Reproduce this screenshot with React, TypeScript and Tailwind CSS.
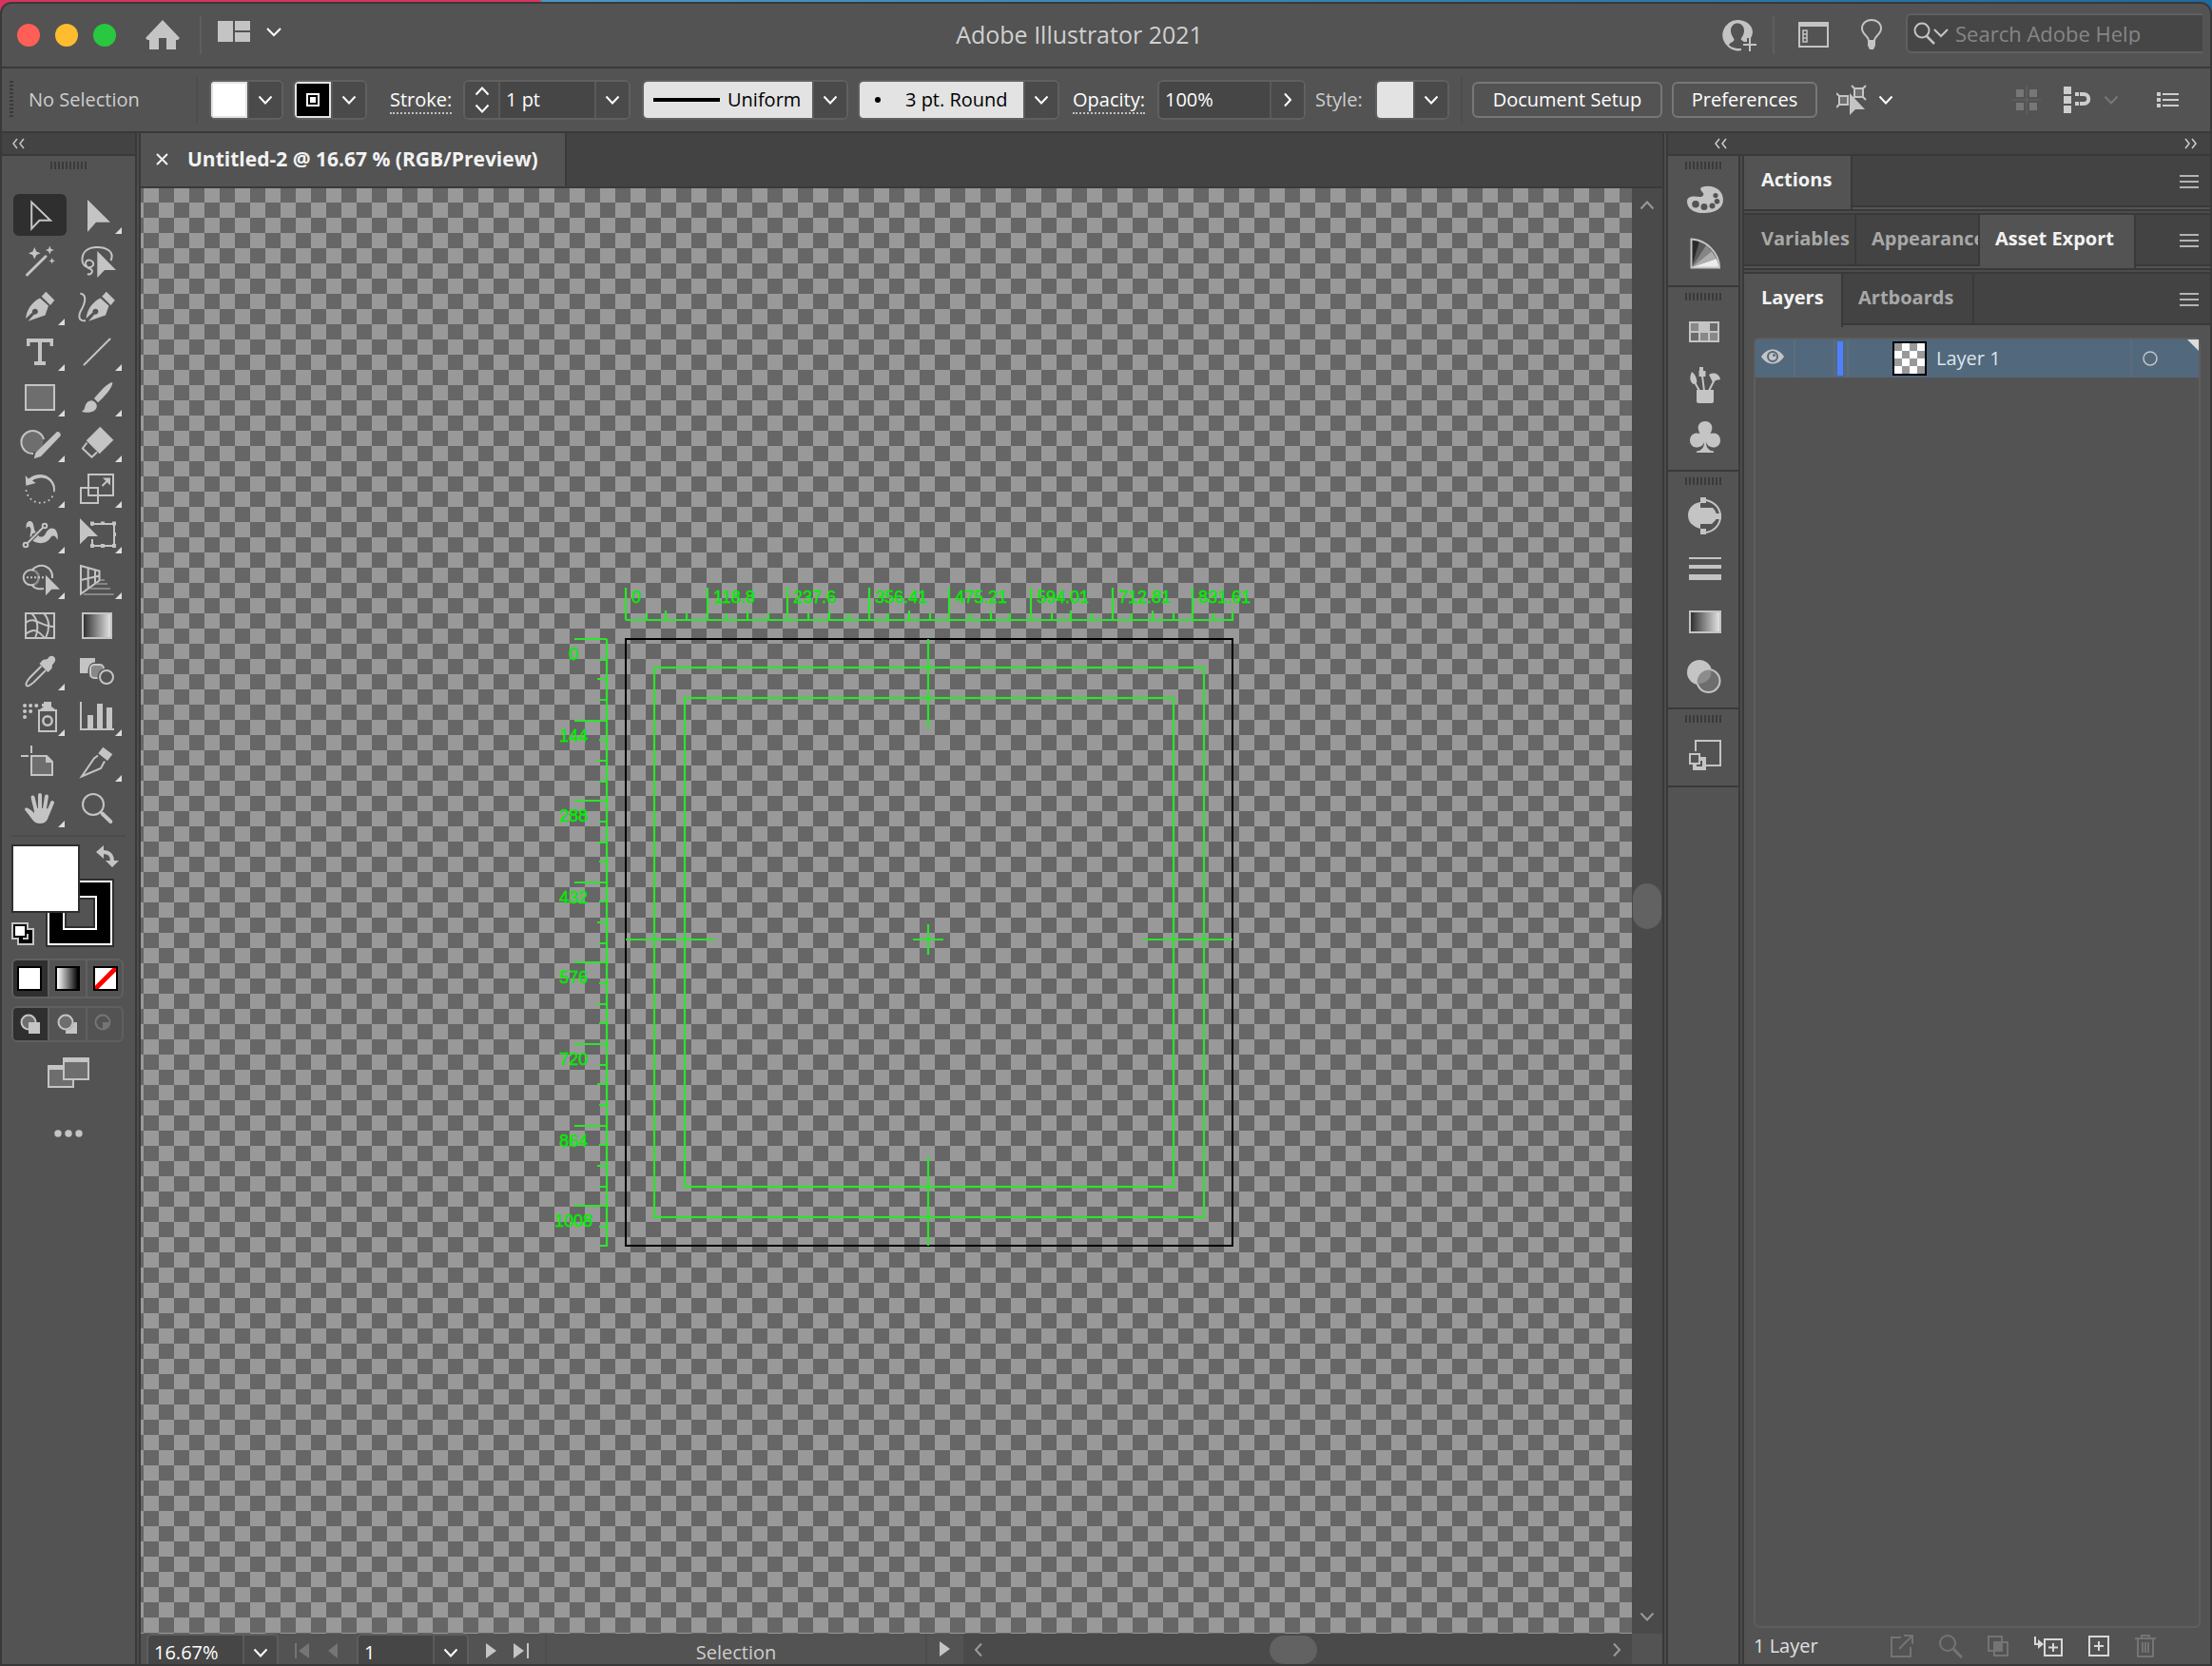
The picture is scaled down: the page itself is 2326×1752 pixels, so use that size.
import type { ReactNode } from 'react'

interface Tool {
  name: string
  icon: ReactNode
  more?: boolean
}

const line = { fill: 'none', stroke: 'currentColor', strokeWidth: 2 }

const nib = (
  <>
    <path d="M34.3 8.7 43.3 17.7 39 23 29.7 13.7Z" />
    <path d="M28 15.5 37 23.5 33.5 33.5 15.5 39.7 22 32.5 A3 3 0 1 0 20 30.5 L13 37 C14 28 19 20 28 15.5Z" />
  </>
)

const tools: Tool[] = [
  { name: 'Selection', icon: <path {...line} d="M19.2 10.5V38.5L27.5 29.8H39Z" /> },
  { name: 'Direct Selection', more: true, icon: <path d="M18 8V42L27 31.7H42Z" /> },
  {
    name: 'Magic Wand',
    icon: (
      <>
        <path {...line} strokeWidth={3} strokeLinecap="round" d="M14.5 39 34 19.8" />
        <path d="M22.3 10 24.2 14.4 28.6 16.3 24.2 18.2 22.3 22.6 20.4 18.2 16 16.3 20.4 14.4Z" />
        <path d="M38.3 8.5 39.6 11.7 42.8 13 39.6 14.3 38.3 17.5 37 14.3 33.8 13 37 11.7Z" />
        <path d="M40.7 21 41.6 23.4 44 24.3 41.6 25.2 40.7 27.6 39.8 25.2 37.4 24.3 39.8 23.4Z" />
      </>
    ),
  },
  {
    name: 'Lasso',
    icon: (
      <>
        <path {...line} d="M42.5 24C47 14 37 10 28 10 18 10 12 15 12.5 24 13 30 20 34 24 29 26 23 15 21 16 28 17 33 23 32 23 35 23 38 20 39 18 38" />
        <path d="M28.3 14V42L36 34H48Z" />
      </>
    ),
  },
  { name: 'Pen', more: true, icon: nib },
  {
    name: 'Curvature',
    icon: (
      <>
        <path {...line} d="M10.3 10.7C17 11 16 19 12.5 26 7 35 9 40 16 39.3" />
        <g transform="translate(3.5 0)">{nib}</g>
      </>
    ),
  },
  { name: 'Type', more: true, icon: <path d="M14 10H42V18H38.5V14H30V34H34V38H22V34H26V14H17.5V18H14Z" /> },
  { name: 'Line Segment', more: true, icon: <path {...line} strokeLinecap="round" d="M14.5 37.5 41.5 10.5" /> },
  { name: 'Rectangle', more: true, icon: <rect x="13" y="11" width="30" height="26" fill="#6e6e6e" stroke="currentColor" strokeWidth="2" /> },
  {
    name: 'Paintbrush',
    more: true,
    icon: (
      <>
        <path d="M44.3 8C45 13 36 23 29 29.3L25 25C31 18 39 8.5 44.3 8Z" />
        <path d="M23.5 27.5C29 30 29 35 25 38 21 40.500 15 40 12 38.700 16 36.500 14.500 33.500 17 30 18.500 28 21 27 23.500 27.500Z" />
      </>
    ),
  },
  {
    name: 'Shaper',
    more: true,
    icon: (
      <>
        <circle cx="20.3" cy="22.500" r="11" fill="#6e6e6e" />
        <path {...line} d="M21 35A12 12 0 1 1 32 20" />
        <path d="M45.500 12.500C47 11 51 14 49.500 16.500L29 38 21.700 40.300 23.500 34Z" />
      </>
    ),
  },
  {
    name: 'Eraser',
    more: true,
    icon: (
      <>
        <path d="M31.300 6.700 45.300 20.700 30.700 35.300 16.700 21.300Z" />
        <path {...line} strokeLinejoin="round" d="M17.500 23.500 12.800 29.500 22.500 38.700 28 33.500" />
      </>
    ),
  },
  {
    name: 'Rotate',
    more: true,
    icon: (
      <>
        <path d="M12.700 10 16 13.500C30 2 47 14 43.500 27.500L42 27C43 15 31 8.500 20 15.500L23.700 18 13.300 20.700Z" />
        <path {...line} strokeLinecap="round" strokeDasharray="0.100 5" d="M13.500 26C17 42 38 43 42.500 29" />
      </>
    ),
  },
  {
    name: 'Scale',
    more: true,
    icon: (
      <>
        <rect {...line} x="19" y="9" width="26" height="22" />
        <rect {...line} x="11" y="23" width="18" height="16" />
        <path {...line} d="M33.500 21 39 15.500" />
        <path d="M34 12.500H42V20.500Z" />
      </>
    ),
  },
  {
    name: 'Width',
    more: true,
    icon: (
      <>
        <path d="M13.500 18C13 11 16 9 19 10.500 22 12 21 17 23 21 25 27 31 29 34 23 37 17 42 16 45 20 47 23 47 27 46.500 30 45 26 42 24 39.500 27 35 34 28 34 23 32 17 30 18 23 18.500 19 18 15 15 15 13.500 18Z" />
        <circle cx="22" cy="25.300" r="3.500" fill="#535353" stroke="currentColor" strokeWidth="2" />
        <path d="M15 33 31 17" stroke="#535353" strokeWidth="4" />
        <path {...line} d="M15 33 31 17" />
        <circle {...line} cx="13" cy="35" r="2.300" />
        <circle {...line} cx="33" cy="15" r="2.300" />
      </>
    ),
  },
  {
    name: 'Free Transform',
    more: true,
    icon: (
      <>
        <path {...line} d="M23 15V13H46V36H23V29" />
        <path d="M21 10.500H25V14.500H21ZM32 10.500H36V14H32ZM44 10.500H48V14.500H44ZM45 22H48V26H45ZM21 34H25V38H21ZM32 34H36V38H32ZM44 34H48V38H44ZM10 7V34.300L18.700 26H29Z" />
      </>
    ),
  },
  {
    name: 'Shape Builder',
    more: true,
    icon: (
      <>
        <path {...line} d="M20 13C30 4 42 11 41 22M20 30C24 34 28 33.500 32 33" />
        <circle {...line} cx="18.700" cy="21.300" r="8" />
        <path d="M22 14C28 17 28 26 22 29" fill="none" stroke="#888" strokeWidth="2" />
        <path {...line} strokeDasharray="2 2" d="M14 21.300H33" />
        <path d="M34 18.700V40.300L40.300 33.700H49Z" />
      </>
    ),
  },
  {
    name: 'Perspective Grid',
    more: true,
    icon: (
      <>
        <path {...line} d="M11 9 30.500 14.500V24.500L11 38.500ZM18.700 11V33M26 13V28M11 24 30.500 19.500" />
        <path d="M31 24H36M27 28H39M21 33H42M14 39H45.700" fill="none" stroke="#999" strokeWidth="1.500" />
      </>
    ),
  },
  {
    name: 'Mesh',
    icon: (
      <>
        <rect {...line} x="13" y="11" width="30" height="26" />
        <path {...line} d="M19 11C26 17 27 27 23 37M32 11C39 18 38 29 34 37M13 21C22 13 28 25 43 25M13 33C22 26 26 29 33 37" />
      </>
    ),
  },
  { name: 'Gradient', icon: <rect x="13" y="11" width="30" height="26" fill="url(#ramp)" stroke="currentColor" strokeWidth="2" /> },
  {
    name: 'Eyedropper',
    more: true,
    icon: (
      <>
        <path d="M36 11C38 7 41 7 43 9 45 11 44.500 14 41 17L40.500 21 36.500 25 27.500 16 31 12Z" />
        <path {...line} d="M29.500 18.500 17 31C15 34 12 37 14 39 16 41 19 37 21.500 35.500L34 23" />
      </>
    ),
  },
  {
    name: 'Blend',
    icon: (
      <>
        <path d="M10 10H26V14.500C20 15 18.500 19 18.500 26H10Z" />
        <rect x="21" y="17" width="14" height="14" rx="4" fill="#888" stroke="currentColor" strokeWidth="2" />
        <circle cx="38" cy="30" r="9.500" fill="#535353" />
        <circle {...line} cx="38" cy="30" r="7" />
      </>
    ),
  },
  {
    name: 'Symbol Sprayer',
    more: true,
    icon: (
      <>
        <path {...line} strokeWidth={4} strokeLinecap="round" strokeDasharray="0.100 6" d="M12 12H25M12 18H19M12 24H13" />
        <path d="M32 8H40V13L44 16H28L32 13H30V10H32Z" />
        <rect {...line} x="27" y="17" width="18" height="22" />
        <circle {...line} strokeWidth={2.500} cx="36" cy="28" r="4.700" />
      </>
    ),
  },
  { name: 'Column Graph', more: true, icon: <path d="M10 8H12V36H18V22H24V36H28V10H34V36H38V14H44V36H46V38H10Z" /> },
  {
    name: 'Artboard',
    icon: (
      <>
        <path d="M19 17H35L41 23V37H19Z" fill="#6e6e6e" stroke="currentColor" strokeWidth="2" />
        <path d="M34 16V24H42Z" />
        <path {...line} d="M19 6V14M8 17H16" />
      </>
    ),
  },
  {
    name: 'Slice',
    more: true,
    icon: (
      <>
        <path d="M34.300 7.700 44.300 15.300 39 22 29.300 14.300Z" />
        <path {...line} d="M29 16.500 25 19.500 12 38.500 32 30 36 22.500" />
      </>
    ),
  },
  {
    name: 'Hand',
    more: true,
    icon: (
      <>
        <path {...line} strokeWidth={4} strokeLinecap="round" d="M28 10V26M20.500 12.500 24 27M35 11.500 32.500 27M41 18 36 30" />
        <path d="M22 24H35L38.500 26C37 34 36 40 28 40 21 40 21 36 12 25.500 12.500 22 16 23.500 22 29Z" />
      </>
    ),
  },
  {
    name: 'Zoom',
    icon: (
      <>
        <circle {...line} cx="24" cy="20" r="11" />
        <path {...line} strokeWidth={4} strokeLinecap="round" d="M33.500 29.500 42.300 38" />
      </>
    ),
  },
]

const dock: Tool[][] = [
  [
    {
      name: 'Color',
      icon: (
        <path
          fillRule="evenodd"
          d="M35 15C46 11 58 17 58 28 58 38 48 42 38 42 28 42 20 38 20 30 20 24 27 24 33 25 37 25 38 23 37 21 35 19 33 17 35 15ZM50 21A2.600 2.600 0 1 0 50 26.200 2.600 2.600 0 1 0 50 21ZM51.500 27A2.800 2.800 0 1 0 51.500 32.600 2.800 2.800 0 1 0 51.500 27ZM46.500 31.500A3 3 0 1 0 46.500 37.500 3 3 0 1 0 46.500 31.500ZM38 32A3.500 3.500 0 1 0 38 39 3.500 3.500 0 1 0 38 32ZM29 29A3.800 3.800 0 1 0 29 36.600 3.800 3.800 0 1 0 29 29Z"
        />
      ),
    },
    {
      name: 'Color Guide',
      icon: (
        <>
          <path d="M25 43 25 14 33 16Z" fill="#2b2b2b" />
          <path d="M25 43 33 16 40 20Z" fill="#5a5a5a" />
          <path d="M25 43 40 20 46 26Z" fill="#868686" />
          <path d="M25 43 46 26 51 34Z" fill="#adadad" />
          <path d="M25 43 51 34 54 43Z" fill="#ececec" />
          <path {...line} d="M24.500 13.500C40 14 54 28 54 43.500H24.500Z" />
        </>
      ),
    },
  ],
  [
    {
      name: 'Swatches',
      icon: (
        <>
          <path d="M22 18H54V40H22Z" />
          <path d="M24 20H32V28H24ZM44 30H52V38H44ZM34 30H42V38H34Z" fill="#888" />
          <path d="M44 20H52V28H44ZM24 30H32V38H24Z" fill="#6a6a6a" />
        </>
      ),
    },
    {
      name: 'Brushes',
      icon: (
        <>
          <path d="M30 34H48V46A2 2 0 0 1 46 48H32A2 2 0 0 1 30 46ZM33 10H37V14H39.500V20H32.500V14H33ZM25 15C29 18 31 23 30 27L26.500 28C22 25 23 19 25 15ZM43 18C48 15 54 17 55 23L50 24 47 26Z" />
          <path {...line} d="M28 26 33 35M36 19 38 35M49 23 43 35" />
        </>
      ),
    },
    {
      name: 'Symbols',
      icon: (
        <path d="M39 11C44 11 47.500 15 46 20 45.500 22 45 23 44.500 24 51 22 55 26 55 31 55 36 51 39 47 38.500 43 38 41 36 40 33 40 39 43 42 48 42.500V44H30V42.500C35 42 38 39 38 33 37 36 35 38 31 38.500 27 39 23 36 23 31 23 26 27 22 33.500 24 33 23 32.500 22 32 20 30.500 15 34 11 39 11Z" />
      ),
    },
  ],
  [
    {
      name: 'Appearance',
      icon: (
        <>
          <path d="M34 14V20H42L47 20C51 24 52 28 50 33L46 37H34V42C26 40 21 35 21 28 21 21 26 15 34 14Z" />
          <path {...line} d="M40 12C60 16 60 42 40 46" />
          <path d="M34 9H40V15H34ZM50 26H56V32H50ZM34 42H40V48H34Z" />
        </>
      ),
    },
    { name: 'Stroke', icon: <path d="M22 16H56V18H22ZM22 24H56V28H22ZM22 34H56V40H22Z" /> },
    { name: 'Gradient', icon: <rect x="23" y="17" width="32" height="22" fill="url(#ramp)" stroke="currentColor" strokeWidth="2" /> },
    {
      name: 'Transparency',
      icon: (
        <>
          <circle cx="33" cy="25" r="13" />
          <circle cx="42.500" cy="34" r="12" fill="#6e6e6e" stroke="currentColor" strokeWidth="2" />
          <path d="M31 37C29 30 36 22 45 22.500 47 30 41 37 31 37Z" fill="#8c8c8c" />
        </>
      ),
    },
  ],
  [
    {
      name: 'Asset Export',
      icon: (
        <>
          <path {...line} d="M29 26V15H55V41H40" />
          <rect {...line} x="23" y="29" width="10" height="10" />
          <path {...line} strokeWidth={4} d="M28 40V44H38V34H34" />
        </>
      ),
    },
  ],
]

export default function App() {
  return (
    <div className="h-screen overflow-hidden bg-[linear-gradient(to_right,#d8335e_24.4%,#4a96c4_24.5%,#1d6a9e)] pt-0.5 font-['Open_Sans','Noto_Sans',sans-serif] text-[20px] leading-6 font-medium text-[#cdcdcd]">
      <Ramp />
      <div className="flex h-full flex-col overflow-hidden rounded-t-xl border-2 border-[#393939] bg-[#535353]">
        <TitleBar />
        <ControlBar />
        <div className="flex min-h-0 flex-1">
          <Toolbox />
          <Gutter />
          <DocumentWindow />
          <Gutter />
          <div className="flex min-h-0 flex-col">
            <div className="flex h-6 items-center justify-between border-b-2 border-[#393939] bg-[#434343] pr-3 pl-12">
              <CollapseButton label="Expand panels" />
              <CollapseButton label="Collapse panels" right />
            </div>
            <div className="flex min-h-0 flex-1">
              <Dock />
              <Gutter />
              <Panels />
            </div>
          </div>
        </div>
      </div>
    </div>
  )
}

// Shared black to white gradient used by several icons
function Ramp() {
  return (
    <svg className="absolute h-0 w-0" aria-hidden="true">
      <linearGradient id="ramp">
        <stop offset="0" stopColor="#2b2b2b" />
        <stop offset="1" stopColor="#e8e8e8" />
      </linearGradient>
    </svg>
  )
}

function Gutter() {
  return <div className="w-1.5 shrink-0 border-x-2 border-[#393939] bg-[#4c4c4c]" />
}

function Grip() {
  return <div className="mx-auto h-2 w-[38px] bg-[repeating-linear-gradient(to_right,#3a3a3a_0_2px,transparent_2px_4px)]" />
}

function Chevron({ dir = 'down' }: { dir?: 'down' | 'up' | 'right' | 'left' }) {
  const d = {
    down: 'M1.500 4.500 8 11.500 14.500 4.500',
    up: 'M1.500 11.500 8 4.500 14.500 11.500',
    right: 'M5 1.500 11 8 5 14.500',
    left: 'M11 1.500 5 8 11 14.500',
  }[dir]
  return (
    <svg width="16" height="16" className="shrink-0" aria-hidden="true">
      <path {...line} d={d} />
    </svg>
  )
}

function CollapseButton({ label, right }: { label: string; right?: boolean }) {
  return (
    <button aria-label={label}>
      <svg width="16" height="12" className="block">
        <path {...line} strokeWidth={1.5} d={right ? 'M2 1 6 6 2 11M9 1 13 6 9 11' : 'M6 1 2 6 6 11M13 1 9 6 13 11'} />
      </svg>
    </button>
  )
}

function TitleBar() {
  return (
    <header className="flex h-[68px] shrink-0 items-center border-b-2 border-[#393939] text-[#c4c4c4]">
      <div className="flex w-[458px] items-center pl-4">
        <div className="flex gap-4">
          <button aria-label="Close" className="h-6 w-6 rounded-full bg-[#ff5f57]" />
          <button aria-label="Minimize" className="h-6 w-6 rounded-full bg-[#febc2e]" />
          <button aria-label="Zoom window" className="h-6 w-6 rounded-full bg-[#28c840]" />
        </div>
        <button aria-label="Home" className="ml-[30px]">
          <svg width="38" height="34" fill="currentColor" className="block">
            <path d="M19 1 37 20 35 22H33V32H23V20H15V32H5V22H3L1 20Z" />
          </svg>
        </button>
        <div className="ml-5 h-10 w-0.5 bg-[#5e5e5e]" />
        <button aria-label="Arrange documents" className="ml-4">
          <svg width="70" height="32" fill="currentColor" className="block">
            <path d="M1 1H17V23H1ZM19 1H35V11H19ZM19 13H35V23H19Z" />
            <path d="M53 9 60 16 67 9" fill="none" stroke="#fff" strokeWidth="2" />
          </svg>
        </button>
      </div>
      <h1 className="mb-0.5 flex-1 text-center text-[25px] text-[#d0d0d0]">Adobe Illustrator 2021</h1>
      <button aria-label="Share">
        <svg width="38" height="38" fill="currentColor" className="block">
          <path
            fillRule="evenodd"
            d="M17 3A16 16 0 0 0 8 32C12 35 17 36 21 35V33H19C14 33 9 31 8 29 9 27 13 26 13.500 24 14 22 10 20 10 14 10 4 24 4 24 14 24 20 20 22 21 24L24 26H27V22H31C37 12 28 3 17 3Z"
          />
          <path {...line} d="M30 22V36M23 29H37" />
        </svg>
      </button>
      <div className="ml-4 h-10 w-0.5 bg-[#5e5e5e]" />
      <button aria-label="Switch workspace" className="ml-6">
        <svg width="34" height="28" className="block">
          <path d="M1 0H33V5H1Z" fill="currentColor" />
          <path {...line} d="M2 2H32V26H2Z" />
          <path {...line} strokeWidth={1.5} d="M6 9H10V13H6ZM6 13H10V17H6ZM6 17H10V21H6Z" />
        </svg>
      </button>
      <button aria-label="Learn" className="ml-8">
        <svg width="24" height="36" className="block">
          <path {...line} d="M9 24C9 19 2 17 2 11 2 -1 22 -1 22 11 22 17 15 19 15 24Z" />
          <path d="M8 23H16V29L14 33H10L8 29Z" fill="currentColor" />
        </svg>
      </button>
      <label className="mr-2 mb-1 ml-6 flex h-[42px] items-center rounded-l-md border-2 border-r-0 border-[#606060] bg-[#464646] pl-1.5">
        <svg width="38" height="26" aria-hidden="true">
          <circle {...line} cx="9" cy="10" r="7.500" />
          <path {...line} strokeWidth={2.5} d="M14 16 22 24" />
          <path {...line} d="M22 9 29 16 36 9" />
        </svg>
        <input
          type="search"
          aria-label="Search Adobe Help"
          placeholder="Search Adobe Help"
          className="ml-1.5 w-[260px] bg-transparent text-[22px] outline-none placeholder:text-[#868686]"
        />
      </label>
    </header>
  )
}

function Group({ children }: { children: ReactNode }) {
  return <div className="flex h-[42px] shrink-0 items-stretch overflow-hidden rounded-md border-2 border-[#606060] bg-[#464646] text-white">{children}</div>
}

function DropButton({ label, dir }: { label: string; dir?: 'down' | 'right' }) {
  return (
    <button aria-label={label} className="flex w-9 items-center justify-center border-l-2 border-[#5a5a5a] bg-[#4a4a4a] text-white">
      <Chevron dir={dir} />
    </button>
  )
}

function ControlBar() {
  return (
    <div className="flex h-[68px] shrink-0 items-center border-b-2 border-[#393939] pr-8 pl-2">
      <div className="h-10 w-1 bg-[repeating-linear-gradient(to_bottom,#3a3a3a_0_2px,transparent_2px_4px)]" />
      <span className="ml-4 w-[176px]">No Selection</span>
      <div className="h-12 w-0.5 bg-[#4d4d4d]" />
      <div className="ml-3 flex gap-2.5">
        <Group>
          <button aria-label="Fill" className="w-[38px] border-2 border-[#e3e3e3] bg-white" />
          <DropButton label="Fill swatches" />
        </Group>
        <Group>
          <button aria-label="Stroke color" className="flex w-[38px] items-center justify-center border-2 border-[#e3e3e3] bg-black">
            <svg width="14" height="14">
              <path d="M1 1H13V13H1Z" fill="none" stroke="#fff" strokeWidth="2" />
              <path d="M4 4H10V10H4Z" fill="#fff" />
            </svg>
          </button>
          <DropButton label="Stroke swatches" />
        </Group>
      </div>
      <div className="ml-6 w-[77px] text-white">
        <label htmlFor="stroke" className="border-b-2 border-dotted border-[#c0c0c0]">
          Stroke:
        </label>
      </div>
      <Group>
        <div className="flex w-[35px] flex-col items-center justify-between bg-[#4a4a4a] py-0.5">
          <button aria-label="Increase stroke">
            <Chevron dir="up" />
          </button>
          <button aria-label="Decrease stroke">
            <Chevron />
          </button>
        </div>
        <input id="stroke" defaultValue="1 pt" className="w-[101px] border-l-2 border-[#5a5a5a] bg-transparent pl-1.5 outline-none" />
        <DropButton label="Stroke presets" />
      </Group>
      <div className="ml-3">
        <Group>
          <div className="flex items-center bg-[#e3e3e3] pl-2.5 text-black">
            <svg width="70" height="4" aria-hidden="true">
              <path d="M0 0H70V4H0Z" />
            </svg>
            <select aria-label="Variable width profile" className="w-[97px] appearance-none bg-transparent pl-2 outline-none">
              <option>Uniform</option>
            </select>
          </div>
          <DropButton label="Width profiles" />
        </Group>
      </div>
      <div className="ml-2.5">
        <Group>
          <div className="flex items-center bg-[#e3e3e3] pl-4 text-black">
            <svg width="6" height="6" aria-hidden="true">
              <circle cx="3" cy="3" r="3" />
            </svg>
            <select aria-label="Brush definition" className="w-[150px] appearance-none bg-transparent pl-[26px] outline-none">
              <option>3 pt. Round</option>
            </select>
          </div>
          <DropButton label="Brush list" />
        </Group>
      </div>
      <div className="ml-3.5 w-[89px] text-white">
        <label htmlFor="opacity" className="border-b-2 border-dotted border-[#c0c0c0]">
          Opacity:
        </label>
      </div>
      <Group>
        <input id="opacity" defaultValue="100%" className="w-[116px] bg-transparent pl-1.5 outline-none" />
        <DropButton label="Opacity slider" dir="right" />
      </Group>
      <span className="ml-2.5 w-[63px]">Style:</span>
      <Group>
        <button aria-label="Graphic style" className="w-[38px] bg-[#e3e3e3]" />
        <DropButton label="Graphic styles" />
      </Group>
      <div className="ml-3 h-12 w-0.5 bg-[#4d4d4d]" />
      <button className="ml-2.5 h-[38px] w-[200px] shrink-0 rounded-md border-2 border-[#777] text-white">Document Setup</button>
      <button className="ml-2.5 h-[38px] w-[153px] shrink-0 rounded-md border-2 border-[#777] text-white">Preferences</button>
      <button aria-label="Select similar objects" className="ml-5 flex items-center gap-3 text-white">
        <svg width="32" height="34" className="text-[#c4c4c4]">
          <path d="M19 5H28V14H19ZM3 13H12V22H3Z" fill="#6e6e6e" stroke="currentColor" strokeWidth="2" />
          <path {...line} d="M16 2 19 5M31 2 28 5M31 17 28 14M0 10 3 13M0 25 3 22" />
          <path d="M14 10V33L20 27H30Z" fill="currentColor" />
        </svg>
        <Chevron />
      </button>
      <div className="ml-auto flex items-center">
        <button aria-label="Align to pixel grid" className="text-[#777]">
          <svg width="30" height="30" fill="currentColor" className="block">
            <path d="M4 4H12V12H4ZM18 4H26V12H18ZM4 18H12V26H4ZM18 18H26V26H18Z" />
            <path d="M15 0V30M0 15H30" stroke="#666" />
          </svg>
        </button>
        <button aria-label="Snap options" className="ml-6 flex items-center gap-3">
          <svg width="30" height="30" fill="currentColor">
            <path d="M0 1H8V9H0ZM0 11H8V19H0ZM0 21H8V29H0ZM12 7H16V11H12ZM12 17H16V21H12Z" />
            <path {...line} strokeWidth={4} d="M17 9H21C28 9 28 19 21 19H17" />
          </svg>
          <span className="text-[#777]">
            <Chevron />
          </span>
        </button>
        <button aria-label="Control bar menu" className="ml-10">
          <svg width="24" height="16" fill="currentColor" className="block">
            <path d="M0 0H4V4H0ZM0 6H4V10H0ZM0 12H4V16H0ZM6 1H23V3H6ZM6 7H23V9H6ZM6 13H23V15H6Z" />
          </svg>
        </button>
      </div>
    </div>
  )
}

function Toolbox() {
  return (
    <aside className="w-[140px] shrink-0 text-[#c4c4c4]">
      <div className="flex h-6 items-center border-b-2 border-[#393939] bg-[#434343] pl-2.5">
        <CollapseButton label="Collapse toolbox" />
      </div>
      <div className="pt-1.5">
        <Grip />
      </div>
      <div className="mt-6 ml-3 grid grid-cols-[56px_56px] gap-x-1">
        {tools.map((tool, i) => (
          <button key={tool.name} aria-label={tool.name} className="h-12 py-0.5">
            <svg
              width="56"
              height="44"
              viewBox="0 2 56 44"
              fill="currentColor"
              className={i === 0 ? 'block rounded-md bg-[#2f2f2f]' : 'block'}
            >
              {tool.icon}
              {tool.more && <path d="M54 37V44H47Z" fill="#dcdcdc" />}
            </svg>
          </button>
        ))}
      </div>
      <div className="mx-2.5 mt-1 h-0.5 bg-[#4b4b4b]" />
      <div className="mt-2 ml-2.5 w-[118px]">
        <FillStroke />
        <div className="mt-3 flex h-[42px] overflow-hidden rounded-md border-2 border-[#606060]">
          <button aria-label="Color" className="flex flex-1 items-center bg-[#2f2f2f] pl-1">
            <span className="h-[26px] w-[26px] border-2 border-black bg-white" />
          </button>
          <button aria-label="Gradient" className="flex w-[42px] items-center justify-center border-x-2 border-[#606060]">
            <span className="h-[26px] w-[26px] border-2 border-black bg-[linear-gradient(to_right,#fff,#000)]" />
          </button>
          <button aria-label="None" className="flex flex-1 items-center justify-end pr-1">
            <svg width="26" height="26" className="border-2 border-black bg-white">
              <path d="M0 22 22 0" stroke="#f00" strokeWidth="5" />
            </svg>
          </button>
        </div>
        <div className="mt-2 flex h-[38px] overflow-hidden rounded-md border-2 border-[#606060]">
          <button aria-label="Draw Normal" className="flex flex-1 items-center justify-center bg-[#2f2f2f]">
            <svg width="22" height="22">
              <circle cx="9" cy="9" r="7.500" fill="#6e6e6e" stroke="currentColor" strokeWidth="2" />
              <path d="M9 9H21V21H9Z" fill="currentColor" />
            </svg>
          </button>
          <button aria-label="Draw Behind" className="flex w-[42px] items-center justify-center border-x-2 border-[#606060]">
            <svg width="22" height="22">
              <path d="M9 9H21V21H9Z" fill="currentColor" />
              <circle cx="9" cy="9" r="8.500" fill="#535353" />
              <circle cx="9" cy="9" r="7.500" fill="#6e6e6e" stroke="currentColor" strokeWidth="2" />
            </svg>
          </button>
          <button aria-label="Draw Inside" disabled className="flex flex-1 items-center justify-center text-[#757575]">
            <svg width="22" height="22">
              <path d="M9 9H17C17 13 13 17 9 17Z" fill="currentColor" />
              <circle {...line} cx="9" cy="9" r="7.500" />
            </svg>
          </button>
        </div>
      </div>
      <div className="mt-4 flex flex-col items-center gap-11">
        <button aria-label="Change screen mode">
          <svg width="44" height="32" className="block">
            <path d="M1 9H27V31H1Z" fill="#6e6e6e" stroke="currentColor" strokeWidth="2" />
            <path d="M1 9H27V13H1Z" fill="currentColor" />
            <path d="M17 1H43V23H17Z" fill="#6e6e6e" stroke="currentColor" strokeWidth="2" />
            <path d="M17 1H43V5H17Z" fill="currentColor" />
          </svg>
        </button>
        <button aria-label="Edit toolbar">
          <svg width="30" height="8" fill="currentColor" className="block">
            <circle cx="4" cy="4" r="3.700" />
            <circle cx="15" cy="4" r="3.700" />
            <circle cx="26" cy="4" r="3.700" />
          </svg>
        </button>
      </div>
    </aside>
  )
}

function FillStroke() {
  return (
    <button aria-label="Fill and stroke" className="block">
      <svg width="118" height="108" className="block">
        <path d="M36 36H108V108H36Z" fill="#2f2f2f" />
        <path d="M38 38H106V106H38Z" fill="#fff" />
        <path d="M40 40H104V104H40Z" fill="#000" />
        <path d="M54 54H90V90H54Z" fill="#fff" />
        <path d="M56 56H88V88H56Z" fill="#2f2f2f" />
        <path d="M58 58H86V86H58Z" fill="#535353" />
        <path d="M0 0H72V72H0Z" fill="#2f2f2f" />
        <path d="M2 2H70V70H2Z" fill="#fff" />
        <path {...line} strokeWidth={4} d="M96 8C103 8 106 11 106 18" />
        <path d="M89 8 97 1V15ZM99 17H113L106 24Z" fill="currentColor" />
        <path d="M0 82H18V88H24V106H6V100H0Z" fill="#c4c4c4" />
        <path d="M8 90H22V104H8Z" fill="#000" />
        <path d="M12 94H18V100H12Z" fill="#c4c4c4" />
        <path d="M2 84H16V98H2Z" fill="#000" />
        <path d="M4 86H14V96H4Z" fill="#fff" />
      </svg>
    </button>
  )
}

function DocumentWindow() {
  return (
    <main className="flex min-w-0 flex-1 flex-col">
      <div className="flex h-[58px] shrink-0 border-b-2 border-[#393939] bg-[#434343]">
        <div className="flex w-[448px] items-center gap-5 border-r-2 border-[#393939] bg-[#535353] pb-0.5 pl-4 text-[21px] font-bold text-[#f2f2f2]">
          <button aria-label="Close document">
            <svg width="13" height="13" className="block">
              <path {...line} d="M1 1 12 12M12 1 1 12" />
            </svg>
          </button>
          <span className="whitespace-nowrap">Untitled-2 @ 16.67 % (RGB/Preview)</span>
        </div>
      </div>
      <div className="flex min-h-0 flex-1">
        <div className="relative min-w-0 flex-1 overflow-hidden bg-[conic-gradient(#666_25%,#999_0_50%,#666_0_75%,#999_0)] bg-[length:32px_32px] bg-[position:3px_-1px]">
          <Artboard />
        </div>
        <div className="flex w-8 shrink-0 flex-col items-center justify-between bg-[#4a4a4a] py-2.5 text-[#9a9a9a]">
          <button aria-label="Scroll up">
            <Chevron dir="up" />
          </button>
          <div className="mb-2.5 h-12 w-[30px] rounded-full bg-[#626262]" />
          <button aria-label="Scroll down">
            <Chevron />
          </button>
        </div>
      </div>
      <StatusBar />
    </main>
  )
}

const across = ['0', '118.8', '237.6', '356.41', '475.21', '594.01', '712.81', '831.61']
const down = ['0', '144', '288', '432', '576', '720', '864', '1008']

function Artboard() {
  const ticks = Array.from({ length: 30 }, (_, i) => Math.round((i * 21.3) / 2) * 2)
  const size = (i: number, minor: number, half: number) => (i % 4 === 0 ? 34 : i % 2 === 0 ? half : minor)
  const rulerX = ticks.map((x, i) => `M${x} -20V${-20 - size(i, 7, 10)}`).join('')
  const rulerY = ticks.map((y, i) => `M-20 ${y}H${-20 - size(i, 8, 10)}`).join('')

  return (
    <svg className="absolute top-[410px] left-[430px]" width="760" height="740" viewBox="-80 -64 760 740" fill="none">
      <rect width="638" height="638" stroke="#000" strokeWidth="2" />
      <g stroke="#2be52b" strokeWidth="2.200">
        <rect x="30" y="30" width="578" height="578" />
        <rect x="62" y="62" width="514" height="514" />
        <path d="M318 0V94M318 544V638M0 316H94M544 316H638M302 316H334M318 300V332" />
        <path d={`M0 -20H638V-30${rulerX}`} />
        <path d={`M-20 0V638H-27${rulerY}`} />
      </g>
      <g fill="#00f000" stroke="#00f000" strokeWidth="0.400" className="font-['Liberation_Sans',Arial,sans-serif] text-[18px] font-normal">
        {across.map((label, i) => (
          <text key={label} x={ticks[i * 4] + 6} y={-38}>
            {label}
          </text>
        ))}
        {down.map((label, i) => (
          <text key={label} x={-55} y={ticks[i * 4] + 22} textAnchor="middle">
            {label}
          </text>
        ))}
      </g>
    </svg>
  )
}

function StatusField({ label, value, width }: { label: string; value: string; width: string }) {
  return (
    <div className="flex h-full overflow-hidden rounded-t-md border-2 border-b-0 border-[#5e5e5e] bg-[#464646] text-white">
      <input aria-label={label} defaultValue={value} className={`${width} bg-transparent pt-1.5 pl-1.5 outline-none`} />
      <button aria-label={`${label} list`} className="flex w-9 items-center justify-center border-l-2 border-[#5a5a5a] bg-[#4a4a4a] pt-1.5">
        <Chevron />
      </button>
    </div>
  )
}

function Step({ label, d, dim }: { label: string; d: string; dim?: boolean }) {
  return (
    <button aria-label={label} disabled={dim} className={dim ? 'pt-1 text-[#757575]' : 'pt-1 text-[#c4c4c4]'}>
      <svg width="18" height="16" fill="currentColor" className="block">
        <path d={d} />
      </svg>
    </button>
  )
}

function StatusBar() {
  return (
    <div className="flex h-8 shrink-0 items-center">
      <div className="ml-1.5 h-full">
        <StatusField label="Zoom level" value="16.67%" width="w-[99px]" />
      </div>
      <div className="mx-4 flex gap-3.5">
        <Step label="First artboard" dim d="M1 0H3V16H1ZM16 0V16L5 8Z" />
        <Step label="Previous artboard" dim d="M14 0V16L4 8Z" />
      </div>
      <StatusField label="Artboard" value="1" width="w-[78px]" />
      <div className="mx-4 flex gap-3">
        <Step label="Next artboard" d="M2 0V16L13 8Z" />
        <Step label="Last artboard" d="M1 0V16L12 8ZM15 0H17V16H15Z" />
      </div>
      <div className="h-full w-[402px] border-x-2 border-[#4d4d4d] pt-2 text-center">Selection</div>
      <div className="ml-3">
        <Step label="Status menu" d="M1 0V16L12 8Z" />
      </div>
      <div className="ml-2 flex h-full flex-1 items-center justify-between bg-[#4a4a4a] pt-0.5 pr-2 pl-2 text-[#9a9a9a]">
        <button aria-label="Scroll left">
          <Chevron dir="left" />
        </button>
        <div className="mr-2.5 h-[30px] w-[50px] rounded-full bg-[#626262]" />
        <button aria-label="Scroll right">
          <Chevron dir="right" />
        </button>
      </div>
      <div className="w-8" />
    </div>
  )
}

function Dock() {
  return (
    <nav className="w-[74px] shrink-0 text-[#c4c4c4]">
      {dock.map((section) => (
        <div key={section[0].name} className="border-b-2 border-[#393939] py-1.5">
          <Grip />
          <div className="mt-1">
            {section.map((item) => (
              <button key={item.name} aria-label={item.name} className="block">
                <svg width="74" height="56" fill="currentColor" className="block">
                  {item.icon}
                </svg>
              </button>
            ))}
          </div>
        </div>
      ))}
    </nav>
  )
}

interface Tab {
  label: string
  width: string
  active?: boolean
}

function TabStrip({ tabs }: { tabs: Tab[] }) {
  return (
    <div className="flex h-14 shrink-0">
      {tabs.map((tab) => (
        <button
          key={tab.label}
          className={`${tab.width} overflow-hidden border-r-2 border-[#393939] text-left font-bold whitespace-nowrap ${
            tab.active ? 'h-14 pb-1.5 text-[#f2f2f2]' : 'h-[54px] border-b-2 bg-[#434343] pb-0.5 text-[#a8a8a8]'
          }`}
        >
          {tab.label}
        </button>
      ))}
      <div className="flex h-[54px] flex-1 items-center justify-end border-b-2 border-[#393939] bg-[#434343] pt-0.5 pr-3">
        <button aria-label="Panel menu">
          <svg width="20" height="14" fill="#b4b4b4" className="block">
            <path d="M0 0H20V2H0ZM0 6H20V8H0ZM0 12H20V14H0Z" />
          </svg>
        </button>
      </div>
    </div>
  )
}

function PanelGap() {
  return <div className="h-1.5 shrink-0 border-y-2 border-[#393939] bg-[#4c4c4c]" />
}

function Panels() {
  return (
    <section className="flex w-[490px] shrink-0 flex-col">
      <TabStrip tabs={[{ label: 'Actions', width: 'w-[114px] pl-[18px]', active: true }]} />
      <PanelGap />
      <TabStrip
        tabs={[
          { label: 'Variables', width: 'w-[118px] pl-[18px]' },
          { label: 'Appearance', width: 'w-[130px] pl-4' },
          { label: 'Asset Export', width: 'w-[164px] pl-4', active: true },
        ]}
      />
      <PanelGap />
      <TabStrip
        tabs={[
          { label: 'Layers', width: 'w-[104px] pl-[18px]', active: true },
          { label: 'Artboards', width: 'w-[138px] pl-4' },
        ]}
      />
      <div className="mx-2.5 mt-[11px] flex-1 rounded-md border-2 border-[#5e5e5e]">
        <div className="flex h-10 items-stretch bg-[#52687d] text-[#dfe5ea]">
          <button aria-label="Toggle visibility" className="flex w-10 items-center justify-center pr-1 pb-1 text-[#c4c4c4]">
            <svg width="24" height="18" fill="currentColor">
              <path fillRule="evenodd" d="M0 9C6 -1 18 -1 24 9 18 19 6 19 0 9ZM12 3A6 6 0 1 0 12 15 6 6 0 1 0 12 3Z" />
              <circle cx="12" cy="9" r="4" />
              <circle cx="13.500" cy="7.500" r="1.500" fill="#52687d" />
            </svg>
          </button>
          <button aria-label="Toggle lock" className="w-11 border-x-2 border-[#5c6c7b]" />
          <div className="my-0.5 ml-0.5 w-1.5 bg-[#4f80ff]" />
          <div className="ml-1 w-12 border-l-2 border-[#5c6c7b]" />
          <div className="h-9 w-9 self-center border-2 border-black bg-[conic-gradient(#fff_25%,#999_0_50%,#fff_0_75%,#999_0)] bg-[length:16px_16px]" />
          <span className="ml-2.5 flex-1 self-center">Layer 1</span>
          <button aria-label="Target layer" className="flex w-[72px] justify-between border-l-2 border-[#5c6c7b] pl-2.5">
            <svg width="18" height="40">
              <circle cx="9" cy="20" r="7" fill="none" stroke="#c4c4c4" strokeWidth="1.500" />
            </svg>
            <svg width="12" height="12">
              <path d="M0 0H12V12Z" fill="#dcdcdc" />
            </svg>
          </button>
        </div>
      </div>
      <footer className="flex h-[38px] shrink-0 items-center pr-14 pl-2.5 text-[#e0e0e0]">
        <span>1 Layer</span>
        <div className="ml-auto flex items-center gap-[25px] text-[#747474]">
          <button aria-label="Collect for export" disabled>
            <svg width="26" height="26" className="block">
              <path {...line} d="M12 4H2V24H22V14M10 16 23 3M15 2H24V11" />
            </svg>
          </button>
          <button aria-label="Locate object" disabled>
            <svg width="26" height="26" className="block">
              <circle {...line} cx="10" cy="10" r="8" />
              <path {...line} strokeWidth={3} d="M16 16 25 25" />
            </svg>
          </button>
          <button aria-label="Make clipping mask" disabled>
            <svg width="24" height="24" className="block">
              <path {...line} d="M2 2H16V17H2ZM16 8H22V22H8V17" />
              <path d="M7 7H16V17H7Z" fill="currentColor" />
            </svg>
          </button>
          <button aria-label="New sublayer" className="text-[#d8d8d8]">
            <svg width="32" height="24" className="block">
              <path {...line} d="M12 5H30V22H12ZM21 9V18M16 13.500H26M2 2V10H6" />
              <path d="M5 5 11 10 5 15Z" fill="currentColor" />
            </svg>
          </button>
          <button aria-label="New layer" className="text-[#d8d8d8]">
            <svg width="24" height="24" className="block">
              <path {...line} d="M2 2H22V22H2ZM12 7V17M7 12H17" />
            </svg>
          </button>
          <button aria-label="Delete" disabled>
            <svg width="24" height="26" className="block">
              <path {...line} d="M1 5H23M8 5V2H16V5M4 5V24H20V5M9 9V20M12 9V20M15 9V20" />
            </svg>
          </button>
        </div>
      </footer>
    </section>
  )
}
